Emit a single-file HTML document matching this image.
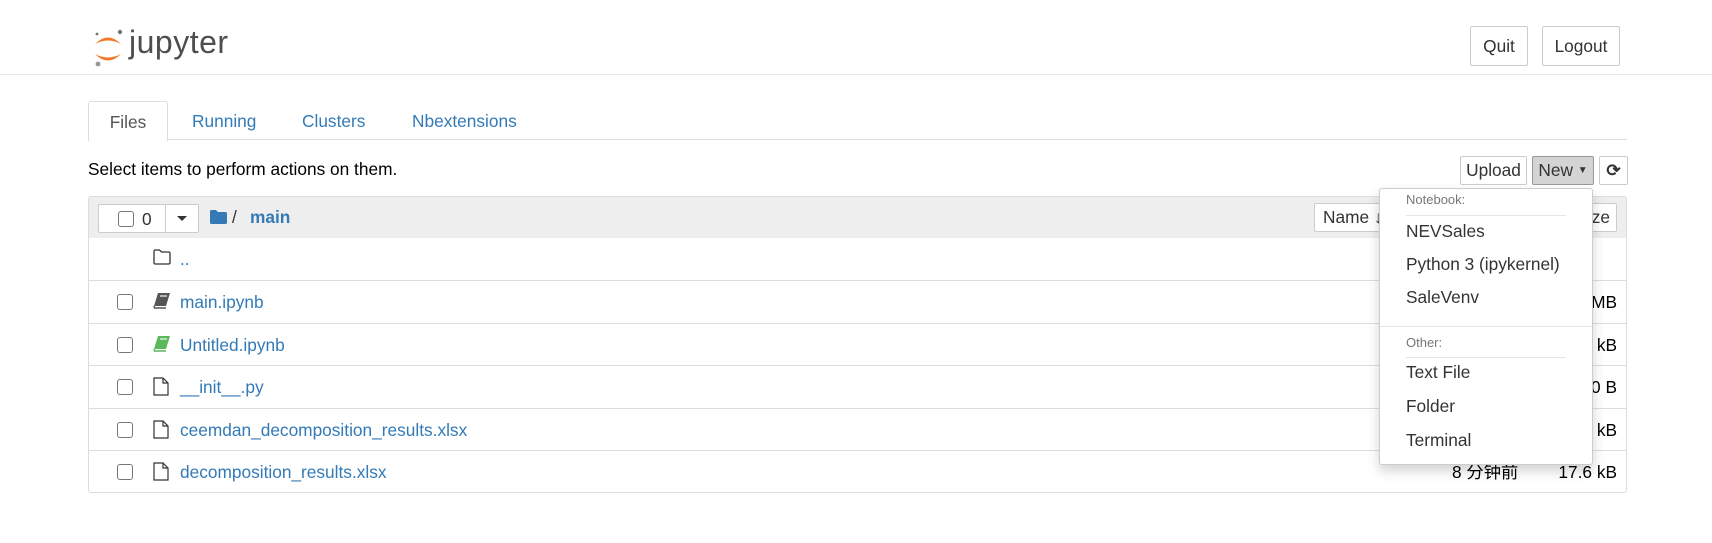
<!DOCTYPE html>
<html><head><meta charset="utf-8"><style>
*{box-sizing:border-box;margin:0;padding:0}
body{width:1712px;height:543px;background:#fff;font-family:"Liberation Sans","Noto Sans CJK SC",sans-serif;font-size:17.3px;color:#000;position:relative;overflow:hidden}
.a{position:absolute}
.btn{position:absolute;border:1px solid #ccc;background:#fff;color:#333;display:flex;align-items:center;justify-content:center;border-radius:2px}
.link{color:#337ab7}
.row{position:absolute;left:88px;width:1539px;border-top:1px solid #ddd;height:43px}
.cb{position:absolute;left:29px;top:13px;width:16px;height:16px;border:1.5px solid #777;border-radius:3px;background:#fff}
.nm{position:absolute;left:92px;top:0;line-height:42px;color:#337ab7}
.ic{position:absolute;left:65px;top:11px}
.sz{position:absolute;right:10px;line-height:42px}
.dd{position:absolute;left:1406px;color:#333;font-size:17.3px}
.hd{position:absolute;left:1406px;color:#777;font-size:13px}
.hr{position:absolute;left:1406px;width:160px;height:1px;background:#e5e5e5}
</style></head><body>
<!-- logo -->
<svg class="a" style="left:93px;top:27px" width="32" height="42" viewBox="0 0 32 42">
<path d="M2 17 Q15 4 28 17 Q15 10 2 17Z" fill="#f37726"/>
<path d="M2 27 Q15 40 28 27 Q15 34 2 27Z" fill="#f37726"/>
<circle cx="27" cy="5" r="2.2" fill="#767677"/><circle cx="4" cy="7" r="1.4" fill="#767677"/><circle cx="5" cy="37" r="2.4" fill="#989798"/>
</svg>
<div class="a" style="left:129px;top:24px;font-size:32px;color:#4e4e4e;letter-spacing:0.5px">jupyter</div>
<div class="btn" style="left:1470px;top:26px;width:58px;height:40px">Quit</div>
<div class="btn" style="left:1542px;top:26px;width:78px;height:40px">Logout</div>
<div class="a" style="left:0;top:74px;width:1712px;height:1px;background:#e7e7e7"></div>
<!-- tabs -->
<div class="a" style="left:88px;top:139px;width:1539px;height:1px;background:#ddd"></div>
<div class="a" style="left:88px;top:101px;width:80px;height:40px;border:1px solid #ddd;border-bottom:none;background:#fff;border-radius:3px 3px 0 0;color:#555;text-align:center;line-height:40px">Files</div>
<div class="a link" style="left:192px;top:101px;line-height:40px">Running</div>
<div class="a link" style="left:302px;top:101px;line-height:40px">Clusters</div>
<div class="a link" style="left:412px;top:101px;line-height:40px">Nbextensions</div>
<div class="a" style="left:88px;top:159px;line-height:20px">Select items to perform actions on them.</div>
<div class="btn" style="left:1460px;top:156px;width:67px;height:29px">Upload</div>
<div class="btn" style="left:1532px;top:156px;width:62px;height:29px;background:#d4d4d4;border-color:#999">New&nbsp;<span style="font-size:10px">▼</span></div>
<div class="btn" style="left:1599px;top:156px;width:29px;height:29px;font-size:17px;font-weight:bold">⟳</div>
<!-- list -->
<div class="a" style="left:88px;top:196px;width:1539px;height:297px;border:1px solid #ddd;border-radius:3px"></div>
<div class="a" style="left:89px;top:197px;width:1537px;height:41px;background:#eee"></div>
<div class="btn" style="left:98px;top:204px;width:101px;height:29px;justify-content:flex-start">
<span style="position:absolute;left:19px;top:6px;width:16px;height:16px;border:1.5px solid #777;border-radius:3px"></span>
<span style="position:absolute;left:43px;top:4px">0</span>
<span style="position:absolute;left:66px;top:0;width:1px;height:27px;background:#ccc"></span>
<span style="position:absolute;left:78px;top:11px;border:5px solid transparent;border-top:5px solid #333"></span></div>
<svg class="a" style="left:210px;top:210px" width="17" height="14" viewBox="0 0 17 14"><path d="M0 1.5Q0 0 1.5 0H6L8 2H15.5Q17 2 17 3.5V12.5Q17 14 15.5 14H1.5Q0 14 0 12.5Z" fill="#337ab7"/></svg>
<div class="a" style="left:232px;top:207px;color:#333">/</div>
<div class="a link" style="left:250px;top:207px;font-weight:bold">main</div>
<div class="btn" style="left:1314px;top:203px;width:80px;height:29px;justify-content:flex-start;padding-left:8px">Name ↓</div>
<div class="btn" style="left:1560px;top:203px;width:57px;height:29px;justify-content:flex-end;padding-right:6px">Size</div>

<div class="row" style="top:238px;border-top:none"><svg class="ic" width="18" height="16" viewBox="0 0 18 16"><path d="M1 2.5Q1 1 2.5 1H6.5L8.5 3H15.5Q17 3 17 4.5V13.5Q17 15 15.5 15H2.5Q1 15 1 13.5Z" fill="none" stroke="#333" stroke-width="1.3"/></svg><span class="nm">..</span></div>
<div class="row" style="top:280px"><span class="cb"></span><svg class="ic" width="18" height="17" viewBox="0 0 18 17"><path d="M5 1H17L13 14H1Z" fill="#555"/><path d="M7 4H14" stroke="#ddd" stroke-width="1.4"/><path d="M1 14L1.5 16H13" stroke="#555" stroke-width="1.5" fill="none"/></svg><span class="nm">main.ipynb</span><span class="sz">1.7 MB</span></div>
<div class="row" style="top:323px"><span class="cb"></span><svg class="ic" width="18" height="17" viewBox="0 0 18 17"><path d="M5 1H17L13 14H1Z" fill="#5cb85c"/><path d="M7 4H14" stroke="#e0f0e0" stroke-width="1.4"/><path d="M1 14L1.5 16H13" stroke="#5cb85c" stroke-width="1.5" fill="none"/></svg><span class="nm">Untitled.ipynb</span><span class="sz">72 kB</span></div>
<div class="row" style="top:365px"><span class="cb"></span><svg class="ic" width="16" height="19" viewBox="0 0 16 19"><path d="M1 1H10L15 6V18H1Z M10 1V6H15" fill="none" stroke="#333" stroke-width="1.2"/></svg><span class="nm">__init__.py</span><span class="sz">0 B</span></div>
<div class="row" style="top:408px"><span class="cb"></span><svg class="ic" width="16" height="19" viewBox="0 0 16 19"><path d="M1 1H10L15 6V18H1Z M10 1V6H15" fill="none" stroke="#333" stroke-width="1.2"/></svg><span class="nm">ceemdan_decomposition_results.xlsx</span><span class="sz">21 kB</span></div>
<div class="row" style="top:450px"><span class="cb"></span><svg class="ic" width="16" height="19" viewBox="0 0 16 19"><path d="M1 1H10L15 6V18H1Z M10 1V6H15" fill="none" stroke="#333" stroke-width="1.2"/></svg><span class="nm">decomposition_results.xlsx</span><span class="a" style="left:1364px;line-height:42px">8 分钟前</span><span class="sz">17.6 kB</span></div>

<!-- dropdown -->
<div class="a" style="left:1379px;top:188px;width:214px;height:277px;background:#fff;border:1px solid #ccc;border-radius:3px;box-shadow:0 6px 12px rgba(0,0,0,.175)"></div>
<div class="hd" style="top:192px">Notebook:</div>
<div class="hr" style="top:215px"></div>
<div class="dd" style="top:221px">NEVSales</div>
<div class="dd" style="top:254px">Python 3 (ipykernel)</div>
<div class="dd" style="top:287px">SaleVenv</div>
<div class="a" style="left:1380px;top:326px;width:212px;height:1px;background:#e5e5e5"></div>
<div class="hd" style="top:335px">Other:</div>
<div class="hr" style="top:357px"></div>
<div class="dd" style="top:362px">Text File</div>
<div class="dd" style="top:396px">Folder</div>
<div class="dd" style="top:430px">Terminal</div>
</body></html>
